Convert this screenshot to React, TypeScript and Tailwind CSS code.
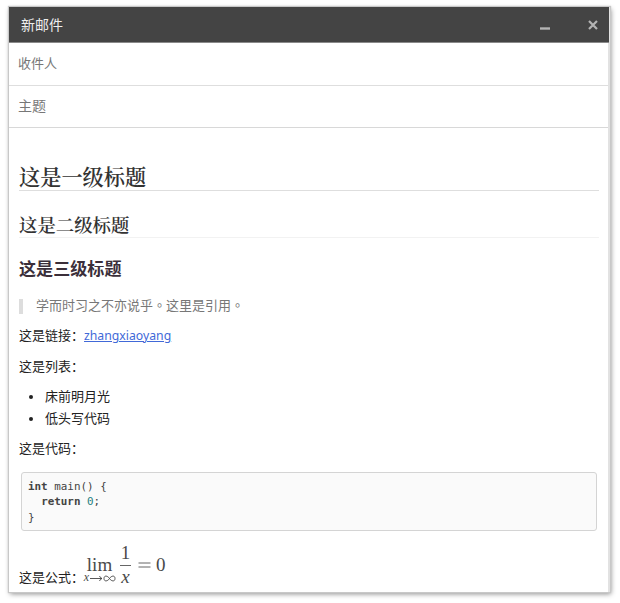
import type { ReactNode } from "react";

function Paragraph({ children }: { children: ReactNode }) {
  return <p className="h-[22px] leading-[20px] whitespace-nowrap">{children}</p>;
}

function Stop() {
  return <span className="font-['Noto_Sans_CJK_TC',sans-serif]">。</span>;
}

function TitleBar() {
  return (
    <header className="mr-[1px] flex h-[36px] items-center border-b border-[#8a8a8a] bg-[#444444] pr-[11px] pl-[12px] text-[14px] text-[#eeeeee]">
      <span className="-mt-[2px] grow leading-[32px]">新邮件</span>
      <svg width="12" height="12" viewBox="0 0 12 12" className="mr-[37px]">
        <path d="M1 9.5H11" stroke="#b4b4b4" strokeWidth="2.4" />
      </svg>
      <svg width="10" height="10" viewBox="0 0 10 10">
        <path d="M1 1L9 9M9 1L1 9" stroke="#b4b4b4" strokeWidth="2.2" />
      </svg>
    </header>
  );
}

function Formula() {
  return (
    <span className="flex items-start pl-[1px] font-['Liberation_Serif',serif] text-[19px] text-[#4a4a4a]">
      <span className="mt-[11px] flex w-[33px] flex-col items-center">
        <span className="h-[18px] leading-[18px]">lim</span>
        <span className="flex h-[9px] items-center text-[12px] leading-[9px]">
          <i className="-mt-[2px] ml-[1px]">x</i>
          <svg width="14" height="7" viewBox="0 0 14 7">
            <path d="M1 3.5H13M10.5 1Q11.2 3 13 3.5Q11.2 4 10.5 6" fill="none" stroke="#444" strokeWidth="0.9" />
          </svg>
          <svg width="13" height="7" viewBox="0 0 13 7">
            <path d="M6.5 3.5C4.5 .4 1 .2 1 3.5S4.5 6.6 6.5 3.5S12 .2 12 3.5S8.5 6.6 6.5 3.5Z" fill="none" stroke="#444" strokeWidth="0.9" />
          </svg>
        </span>
      </span>
      <span className="ml-[4px] flex w-[11px] flex-col items-center">
        <span className="h-[20px] leading-[15px]">1</span>
        <span className="h-px w-full bg-[#666]" />
        <i className="h-[19px] text-[19px] leading-[22px]">x</i>
      </span>
      <svg width="13" height="6" viewBox="0 0 13 6" className="mt-[17px] ml-[7px]">
        <path d="M0.5 1H12.5M0.5 5H12.5" stroke="#555" strokeWidth="0.9" />
      </svg>
      <span className="mt-[11px] ml-[5px] leading-[18px]">0</span>
    </span>
  );
}

export default function App() {
  return (
    <div className="h-[603px] w-[620px] overflow-hidden bg-white pt-[7px] pl-[9px] font-['Noto_Sans_CJK_SC',sans-serif] text-[13px] leading-[22px] text-[#222]">
      <main className="h-[585px] w-[601px] border-r-2 border-[#e2e2e2] bg-white shadow-[0_0_1px_1px_#c8c8c8,1px_2px_5px_rgba(0,0,0,0.45)]">
        <div className="-mr-[2px]">
          <TitleBar />
        </div>
        <div className="h-[43px] border-b border-[#dedede] pl-[9px] leading-[39px] text-[#777]">收件人</div>
        <div className="h-[42px] border-b border-[#d8d8d8] pl-[9px] text-[14px] leading-[39px] text-[#777]">主题</div>
        <article className="pr-[9px] pl-[10px]">
          <h1 className="mt-[36px] h-[27px] border-b border-[#dedede] font-['Noto_Serif_CJK_SC','Noto_Sans_CJK_SC',serif] text-[21.2px] leading-[25px] font-semibold text-[#333]">这是一级标题</h1>
          <h2 className="mt-[22px] h-[25px] border-b border-[#f2f2f2] font-['Noto_Serif_CJK_SC','Noto_Sans_CJK_SC',serif] text-[18.4px] leading-[23px] font-semibold text-[#333]">这是二级标题</h2>
          <h3 className="mt-[20px] h-[24px] text-[17.1px] leading-[20px] font-bold text-[#3b2f3a]">这是三级标题</h3>
          <blockquote className="mt-[17px] h-[15px] border-l-4 border-[#dddddd] pl-[13px] leading-[11px] text-[#777]">
            学而时习之不亦说乎<Stop />这里是引用<Stop />
          </blockquote>
          <div className="mt-[11px]">
            <Paragraph>
              这是链接：
              <a href="#" className="font-['Noto_Sans',sans-serif] text-[12.25px] text-[#4169d8] underline">zhangxiaoyang</a>
            </Paragraph>
          </div>
          <div className="mt-[9px]"><Paragraph>这是列表：</Paragraph></div>
          <ul className="mt-[8px] pl-[10px] leading-[20px]">
            {["床前明月光", "低头写代码"].map((item) => (
              <li key={item} className="flex h-[22px] items-start">
                <span className="mt-[9px] mr-[12px] h-[4px] w-[4px] rounded-full bg-[#222]" />
                {item}
              </li>
            ))}
          </ul>
          <div className="mt-[8px]"><Paragraph>这是代码：</Paragraph></div>
          <pre className="mt-[12px] mr-[2px] ml-[2px] h-[59px] rounded-[3px] border border-[#d4d4d4] bg-[#fafafa] pt-[6px] pl-[6px] font-['DejaVu_Sans_Mono',monospace] text-[10.9px] leading-[15.4px] text-[#444]">
            <div><b>int</b>{" main() {"}</div>
            <div>{"  "}<b>return</b>{" "}<span className="text-[#258080]">0</span>;</div>
            <div>{"}"}</div>
          </pre>
          <div className="mt-[14px] flex h-[46px]">
            <span className="mt-[21px] w-[63px] whitespace-nowrap">这是公式：</span>
            <Formula />
          </div>
        </article>
      </main>
    </div>
  );
}
